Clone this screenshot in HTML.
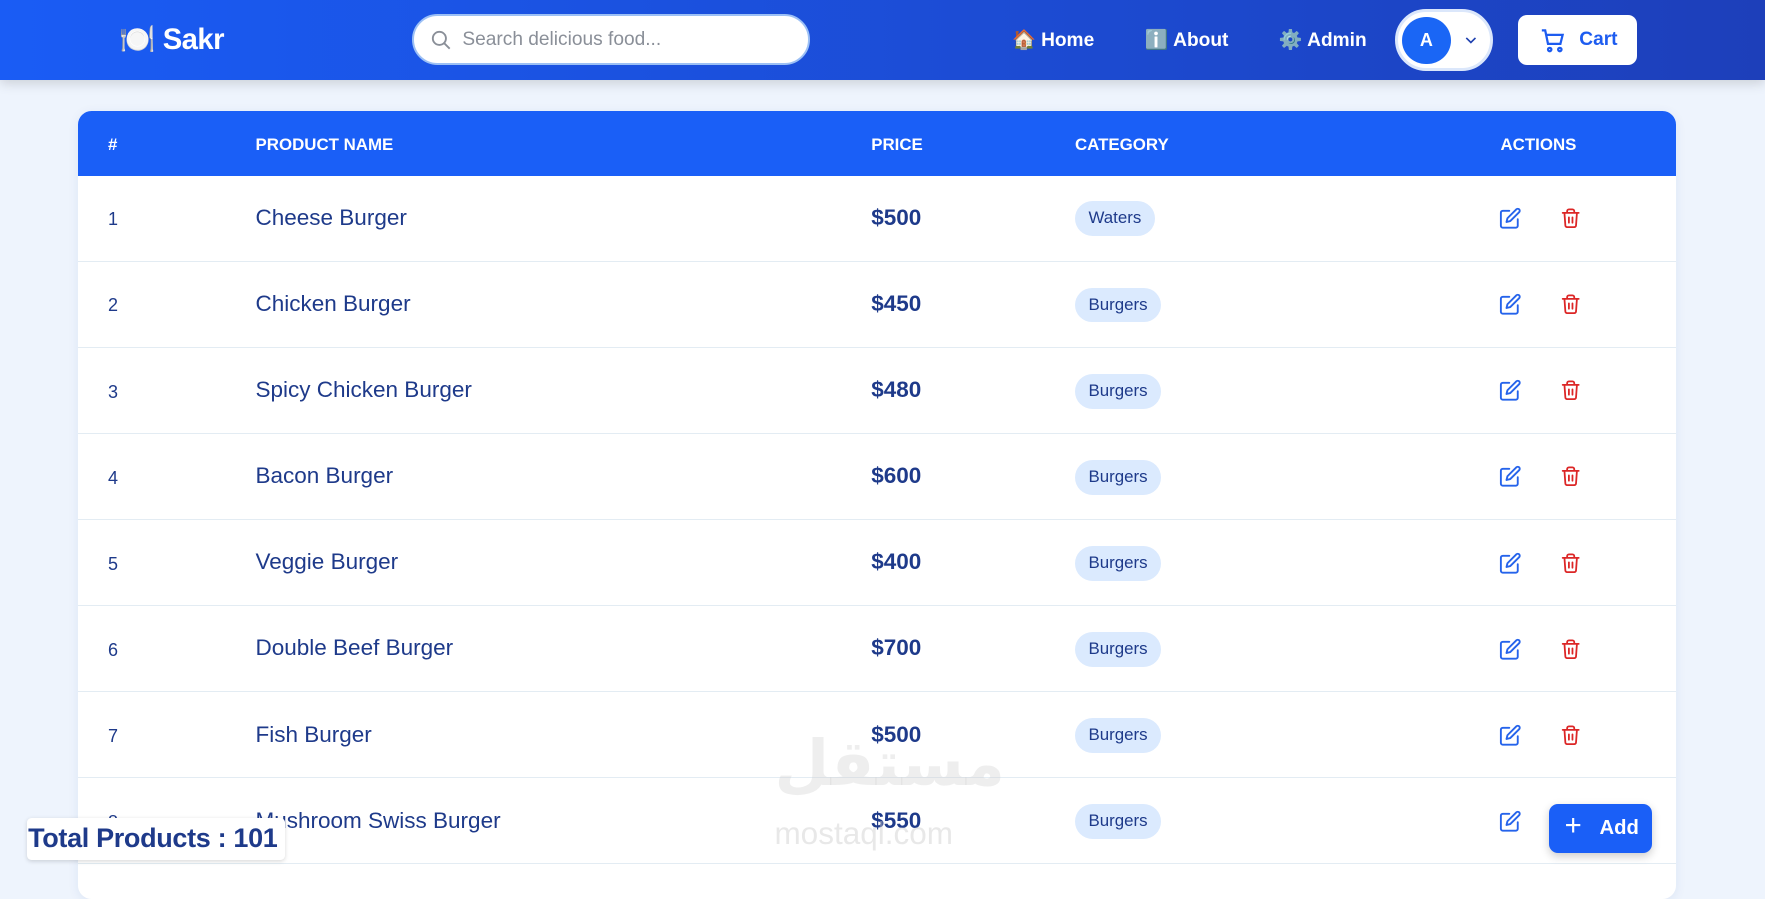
<!DOCTYPE html>
<html><head><meta charset="utf-8"><style>
html{zoom:1.12564}
*{box-sizing:border-box;margin:0;padding:0}
body{width:1568px;height:770px;overflow:hidden;background:#eef4fd;font-family:"Liberation Sans",sans-serif;color:#1e3a8a;position:relative}
.nav{position:absolute;left:0;top:0;width:1568px;height:71px;background:linear-gradient(90deg,#1a5cf5,#1d3fba);box-shadow:0 3px 10px rgba(0,0,0,.15)}
.abs{position:absolute}
.logo{left:106px;top:20px;font-size:26px;font-weight:bold;color:#fff;letter-spacing:-0.5px}
.search{left:366px;top:12px;width:354px;height:46px;background:#fff;border:2px solid #9cc0f5;border-radius:23px}
.search span{position:absolute;left:43px;top:12px;font-size:17px;color:#8a8f98}
.nl{top:25px;font-size:17px;font-weight:bold;color:#fff}
.pill{left:1239px;top:8px;width:87px;height:55px;border:3px solid #dbe7fb;border-radius:28px;background:#fff}
.pill .c{position:absolute;left:4px;top:4px;width:43px;height:42px;border-radius:50%;background:#1a66f5;color:#fff;font-weight:bold;font-size:16px;text-align:center;line-height:42px}
.cart{left:1349px;top:13px;width:105px;height:45px;background:#fff;border-radius:8px;color:#1d5cf0;font-weight:bold;font-size:17px}
.table{left:69px;top:99px;width:1420px;height:700px;background:#fff;border-radius:12px;overflow:hidden;box-shadow:0 2px 10px rgba(30,60,140,.08)}
.th{position:absolute;left:0;top:0;width:1420px;height:57px;background:#1a5ff7;color:#fff;font-size:15px;font-weight:bold}
.th div,.row div{position:absolute}
.row{position:absolute;left:0;width:1420px;height:76.5px;border-bottom:1px solid #e3ecf3}
.n{left:27px;top:30px;font-size:16px}
.p{left:158px;top:26px;font-size:20px}
.pr{left:705px;top:26px;font-size:20px;font-weight:bold}
.b{left:886px;top:23px;height:31px;padding:0 12px;line-height:31px;border-radius:16px;background:#dbeafe;font-size:15px;color:#1e3a8a}
.e{left:1263px;top:28px}
.t{left:1317px;top:28px}
</style></head><body>
<div class="nav">
<div class="abs logo">🍽️ Sakr</div>
<div class="abs search"><svg style="position:absolute;left:14px;top:12px" width="20" height="20" viewBox="0 0 24 24" fill="none" stroke="#8a8f98" stroke-width="2"><circle cx="10" cy="10" r="7"/><path d="M15 15l6 6"/></svg><span>Search delicious food...</span></div>
<div class="abs nl" style="left:899px">🏠 Home</div>
<div class="abs nl" style="left:1017px">ℹ️ About</div>
<div class="abs nl" style="left:1136px">⚙️ Admin</div>
<div class="abs pill"><div class="c">A</div><svg style="position:absolute;left:58px;top:18px" width="14" height="14" viewBox="0 0 24 24" fill="none" stroke="#1e40af" stroke-width="2.5"><path d="M5 9l7 7 7-7"/></svg></div>
<div class="abs cart"><svg style="position:absolute;left:18px;top:11px" width="25" height="24" viewBox="0 0 24 24" fill="none" stroke="#1d5cf0" stroke-width="2"><path d="M2 3h3l2.5 12h11l2-8H6.5"/><circle cx="9" cy="20" r="1.5"/><circle cx="18" cy="20" r="1.5"/></svg><span style="position:absolute;left:54px;top:13px">Cart</span></div>
</div>
<div class="abs table">
<div class="th"><div style="left:27px;top:21px">#</div><div style="left:158px;top:21px">PRODUCT NAME</div><div style="left:705px;top:21px">PRICE</div><div style="left:886px;top:21px">CATEGORY</div><div style="left:1264px;top:21px">ACTIONS</div></div>
</div>
<div class="abs" style="left:688px;top:645px;font-size:56px;font-weight:bold;color:rgba(205,205,205,.35);font-family:'DejaVu Sans',sans-serif">مستقل</div>
<div class="abs" style="left:688px;top:724px;font-size:28px;color:rgba(205,205,205,.45)">mostaql.com</div>
<div class="abs" style="left:24px;top:727px;width:229px;height:37px;background:#fff;border-radius:4px;box-shadow:0 1px 4px rgba(0,0,0,.15);font-size:24px;font-weight:bold;line-height:37px;padding-left:1px;color:#1e3a8a;white-space:nowrap;letter-spacing:-0.3px">Total Products : 101</div>
<div class="abs" style="left:1376px;top:714px;width:92px;height:44px;background:#1a5ff7;border-radius:8px;color:#fff;font-weight:bold;font-size:18px;box-shadow:0 3px 8px rgba(0,0,0,.2)"><span style="position:absolute;left:14px;top:6px;font-size:26px;font-weight:normal">+</span><span style="position:absolute;left:45px;top:12px">Add</span></div>
<script>
var d=[["Cheese Burger","$500","Waters"],["Chicken Burger","$450","Burgers"],["Spicy Chicken Burger","$480","Burgers"],["Bacon Burger","$600","Burgers"],["Veggie Burger","$400","Burgers"],["Double Beef Burger","$700","Burgers"],["Fish Burger","$500","Burgers"],["Mushroom Swiss Burger","$550","Burgers"]];
var ed='<svg width="20" height="20" viewBox="0 0 24 24" fill="none" stroke="#2563eb" stroke-width="2" stroke-linecap="round" stroke-linejoin="round"><path d="M11 4H4a2 2 0 0 0-2 2v14a2 2 0 0 0 2 2h14a2 2 0 0 0 2-2v-7"/><path d="M18.5 2.5a2.1 2.1 0 0 1 3 3L12 15l-4 1 1-4z"/></svg>';
var tr='<svg width="19" height="20" viewBox="0 0 24 24" fill="none" stroke="#dc2626" stroke-width="2" stroke-linecap="round" stroke-linejoin="round"><path d="M3 6h18M8 6V4a2 2 0 0 1 2-2h4a2 2 0 0 1 2 2v2M19 6l-1 14a2 2 0 0 1-2 2H8a2 2 0 0 1-2-2L5 6M10 11v6M14 11v6"/></svg>';
var h='';d.forEach(function(r,i){h+='<div class="row" style="top:'+(57+i*76.5)+'px"><div class="n">'+(i+1)+'</div><div class="p">'+r[0]+'</div><div class="pr">'+r[1]+'</div><div class="b">'+r[2]+'</div><div class="e">'+ed+'</div><div class="t">'+tr+'</div></div>';});
document.querySelector('.table').insertAdjacentHTML('beforeend',h);
</script>
</body></html>
